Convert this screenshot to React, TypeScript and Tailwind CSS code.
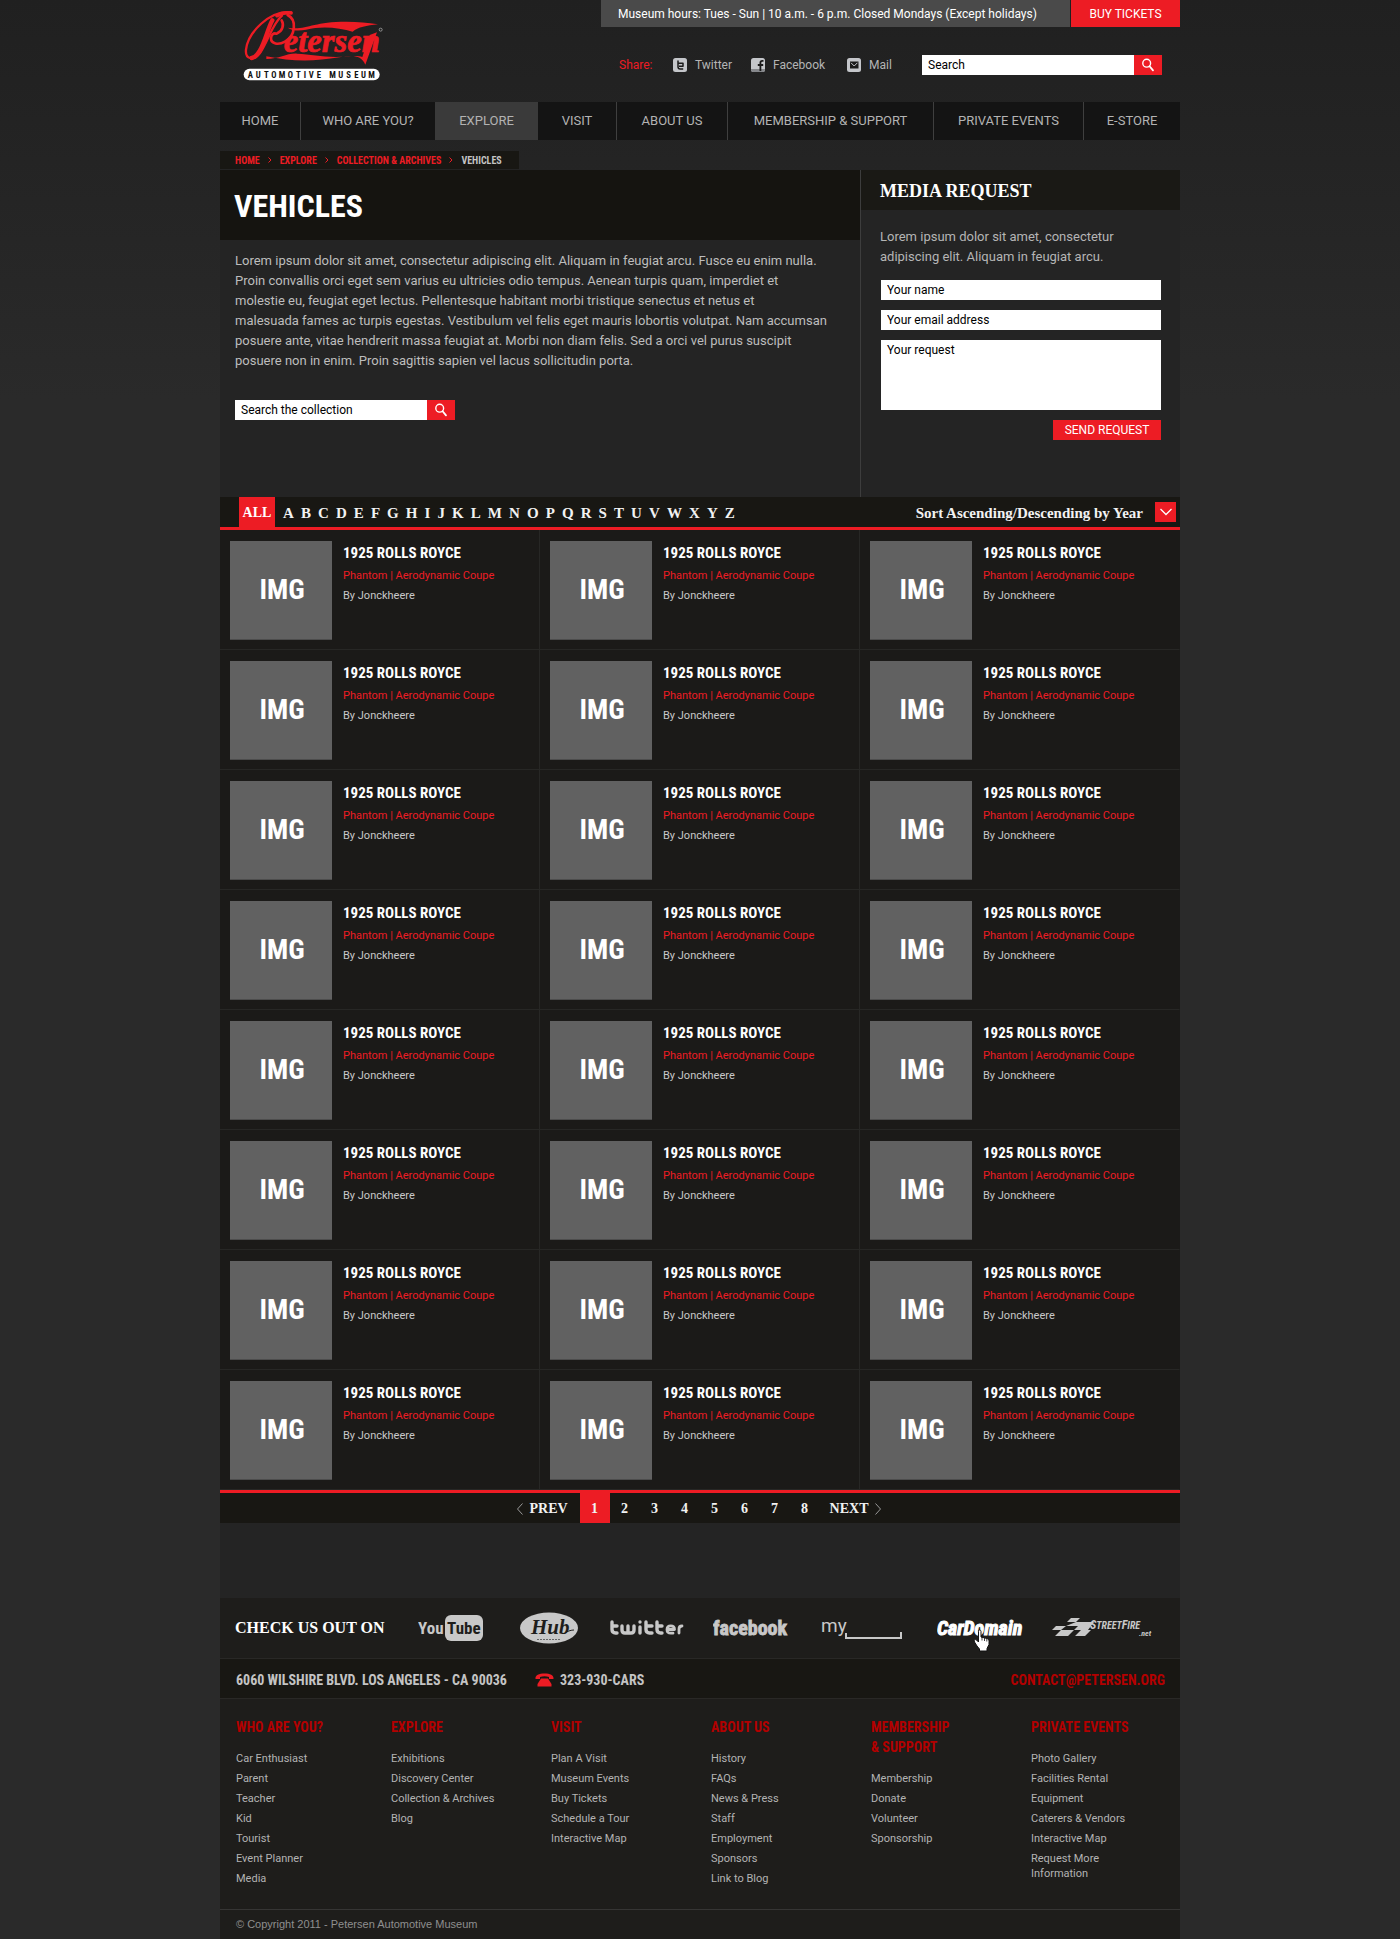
import type { ReactNode } from "react";

const sans = "font-['Roboto',sans-serif]";
const narrow = "font-['Roboto_Condensed','Roboto',sans-serif]";
const slab = "font-['Liberation_Serif',serif]";

function SearchIcon() {
  return (
    <svg viewBox="0 0 14 14" className="h-3.5 w-3.5" fill="none" stroke="#ffffff" aria-hidden="true">
      <circle cx="5.7" cy="5.2" r="3.9" strokeWidth="1.4" />
      <path d="M8.6 8.3 12 12.4" strokeWidth="1.8" strokeLinecap="round" />
    </svg>
  );
}

function Logo() {
  return (
    <svg viewBox="70 25 426 222" className="h-[74px] w-[142px]" role="img" aria-label="Petersen Automotive Museum">
      <g fill="none" stroke="#ed1c24" strokeLinecap="round">
        <path d="M215 38C150 30 84 100 79 150c-3 30 24 34 42 10 22-30 38-90 66-112" strokeWidth="7" />
        <path d="M214 40c-14-2-30 0-42 8" strokeWidth="11" />
        <path d="M158 62c-14 26-22 66-38 92-8 13-16 20-24 21" strokeWidth="13" />
        <path d="M204 46c28 14 24 62-8 80-20 11-42 7-42-10 0-11 8-17 16-14" strokeWidth="8" />
        <path d="M186 62c8 14 2 32-12 38" strokeWidth="8" />
      </g>
      <g fill="#ed1c24" stroke="#ed1c24">
        <path stroke="none" d="M204 84c60 8 70-18 176-18 36 0 64 3 95 8-34 4-60 8-76 22-40-12-92-18-140-6-20 4-40 4-55-6z" />
        <path stroke="none" d="M140 178c40 0 62-18 92-16 48 2 88 14 152 8 20-2 34-2 44 2l22-66 22-8-35 97c-14-30-38-28-78-22-72 12-140 14-219-3z" />
        <text x="192" y="158" strokeWidth="2" className="font-['Liberation_Serif',serif]" fontSize="98" fontStyle="italic" fontWeight="700">etersen</text>
      </g>
      <circle cx="483" cy="90" r="4.5" fill="none" stroke="#bbb" strokeWidth="2" />
      <rect x="72" y="207" width="408" height="35" rx="17.5" fill="#fff" />
      <g className={narrow} fill="#111" fontSize="26" fontWeight="700">
        <text y="234" x="84 108 133 155 177 204 229 252 267 291">AUTOMOTIVE</text>
        <text y="234" x="329 356 380 404 424 446">MUSEUM</text>
      </g>
    </svg>
  );
}

function TwitterBadge() {
  return (
    <svg viewBox="0 0 14 14" className="h-3.5 w-3.5" aria-hidden="true">
      <rect width="14" height="14" rx="2.5" fill="#c4c6ca" />
      <path d="M5 2.500v6.200c0 1.600.9 2.300 2.300 2.300h2.900M5 5.200h5v3H6" fill="none" stroke="#1a1a1a" strokeWidth="1.500" strokeLinejoin="round" />
    </svg>
  );
}

function FacebookBadge() {
  return (
    <svg viewBox="0 0 14 14" className="h-3.5 w-3.5" aria-hidden="true">
      <rect width="14" height="14" rx="2.5" fill="#c4c6ca" />
      <path d="M0 11h14v.5A2.500 2.500 0 0 1 11.500 14h-9A2.500 2.500 0 0 1 0 11.500z" fill="#85878b" />
      <path d="M12.500 2.800h-1.200c-1.300 0-1.900.6-1.900 1.900V13M6.800 7h5.400" fill="none" stroke="#1a1a1a" strokeWidth="1.800" />
    </svg>
  );
}

function MailBadge() {
  return (
    <svg viewBox="0 0 14 14" className="h-3.5 w-3.5" aria-hidden="true">
      <rect width="14" height="14" rx="2.5" fill="#c4c6ca" />
      <rect x="3" y="3.500" width="8.500" height="7" fill="#1a1a1a" />
      <path d="M4 4.800 7.200 8l3.200-3.200" fill="none" stroke="#c4c6ca" strokeWidth="1" />
    </svg>
  );
}

const navItems = ["HOME", "WHO ARE YOU?", "EXPLORE", "VISIT", "ABOUT US", "MEMBERSHIP & SUPPORT", "PRIVATE EVENTS", "E-STORE"];

function Header() {
  return (
    <header>
      <div className="flex items-start justify-between">
        <a href="#home" className="mt-2 ml-[23px]">
          <Logo />
        </a>
        <div className="flex w-[579px] flex-col">
          <div className="flex h-[27px] gap-px text-xs text-white">
            <p className="flex flex-1 items-center bg-[#4a4a4a] pl-[17px]">
              Museum hours: Tues - Sun | 10 a.m. - 6 p.m. Closed Mondays (Except holidays)
            </p>
            <a href="#tickets" className="flex w-[109px] items-center justify-center bg-[#ed1c24]">BUY TICKETS</a>
          </div>
          <div className="mt-7 flex items-center pr-[18px] pl-[18px] text-xs text-[#b5b5b5]">
            <span className="w-[54px] text-[#ed1c24]">Share:</span>
            <a href="#twitter" className="flex w-[78px] items-center gap-2"><TwitterBadge />Twitter</a>
            <a href="#facebook" className="flex w-24 items-center gap-2"><FacebookBadge />Facebook</a>
            <a href="#mail" className="flex items-center gap-2"><MailBadge />Mail</a>
            <form className="ml-auto flex h-5 w-60">
              <input aria-label="Search" placeholder="Search" className="min-w-0 flex-1 bg-white px-1.5 text-black placeholder:text-black" />
              <button type="button" aria-label="Search" className="flex w-7 items-center justify-center bg-[#ed1c24]"><SearchIcon /></button>
            </form>
          </div>
        </div>
      </div>
      <nav className="mt-5 grid grid-cols-[81fr_134fr_103fr_79fr_111fr_206fr_150fr_96fr] bg-[#141414] text-[13px] leading-[38px] text-[#b3b3b3]">
        {navItems.map((item, i) => (
          <a
            key={item}
            href={"#" + item}
            className={
              "text-center whitespace-nowrap " +
              (item === "EXPLORE" ? "bg-[#3a3a3a]" : i === 1 || i === 7 ? "" : "border-r border-[#3f3f3f]")
            }
          >
            {item}
          </a>
        ))}
      </nav>
    </header>
  );
}

function Breadcrumb() {
  const links = ["HOME", "EXPLORE", "COLLECTION & ARCHIVES"];
  return (
    <nav aria-label="Breadcrumb" className={"mt-[11px] mb-px flex h-[18px] w-[299px] items-center gap-2 bg-[#181713] pl-[15px] text-[10px] font-bold whitespace-nowrap text-[#ed1c24] " + narrow}>
      {links.map((l) => (
        <span key={l} className="flex items-center gap-2">
          <a href={"#" + l}>{l}</a>
          <svg viewBox="0 0 4 6" className="h-1.5 w-1" fill="none" stroke="#ed1c24" aria-hidden="true"><path d="M.5.5 3 3 .5 5.500" /></svg>
        </span>
      ))}
      <span className="text-[#c4c4c4]">VEHICLES</span>
    </nav>
  );
}

function Intro() {
  return (
    <section className="flex-1 border-r border-[#3d3d3d]">
      <h1 className={"bg-[#151410] pt-0.5 pl-3.5 text-[32px] leading-[68px] font-bold text-white " + narrow}>VEHICLES</h1>
      <p className="pt-[11px] pl-[15px] text-[13px] leading-5 text-[#bdbdbd]">
        Lorem ipsum dolor sit amet, consectetur adipiscing elit. Aliquam in feugiat arcu. Fusce eu enim nulla.<br />
        Proin convallis orci eget sem varius eu ultricies odio tempus. Aenean turpis quam, imperdiet et<br />
        molestie eu, feugiat eget lectus. Pellentesque habitant morbi tristique senectus et netus et<br />
        malesuada fames ac turpis egestas. Vestibulum vel felis eget mauris lobortis volutpat. Nam accumsan<br />
        posuere ante, vitae hendrerit massa feugiat at. Morbi non diam felis. Sed a orci vel purus suscipit<br />
        posuere non in enim. Proin sagittis sapien vel lacus sollicitudin porta.
      </p>
      <form className="mt-[29px] mb-[77px] ml-[15px] flex h-5 w-[220px] text-xs">
        <input aria-label="Search the collection" placeholder="Search the collection" className="min-w-0 flex-1 bg-white px-1.5 text-black placeholder:text-black" />
        <button type="button" aria-label="Search the collection" className="flex w-7 items-center justify-center bg-[#ed1c24]"><SearchIcon /></button>
      </form>
    </section>
  );
}

function MediaRequest() {
  const field = "w-full bg-white px-1.5 text-black placeholder:text-black";
  return (
    <section className="w-[319px]">
      <h2 className={"bg-[#1a1915] pt-0.5 pl-[19px] text-lg leading-[38px] font-bold text-white " + slab}>MEDIA REQUEST</h2>
      <p className="pt-[17px] pl-[19px] text-[13px] leading-5 text-[#b5b5b5]">
        Lorem ipsum dolor sit amet, consectetur<br />adipiscing elit. Aliquam in feugiat arcu.
      </p>
      <form className="mt-[13px] mr-[19px] ml-5 flex flex-col items-end gap-2.5 text-xs">
        <input aria-label="Your name" placeholder="Your name" className={"h-5 " + field} />
        <input aria-label="Your email address" placeholder="Your email address" className={"h-5 " + field} />
        <textarea aria-label="Your request" placeholder="Your request" className={"block h-[70px] resize-none pt-0.5 " + field} />
        <button type="button" className="h-5 w-[108px] bg-[#ed1c24] text-white">SEND REQUEST</button>
      </form>
    </section>
  );
}

function FilterBar() {
  return (
    <div className={"flex h-[33px] items-stretch border-b-3 border-[#ed1c24] bg-[#181713] pl-[19px] text-[15px] font-bold text-[#f2f2f2] " + slab}>
      <a href="#all" className="flex w-9 items-center justify-center bg-[#ed1c24] pt-0.5 text-sm text-white">ALL</a>
      <div className="ml-2 flex w-[452px] items-center justify-between pt-0.5">
        {"ABCDEFGHIJKLMNOPQRSTUVWXYZ".split("").map((c) => (
          <a key={c} href={"#" + c}>{c}</a>
        ))}
      </div>
      <button type="button" className="mr-1 ml-auto flex items-center gap-3">
        <span className="pt-0.5">Sort Ascending/Descending by Year</span>
        <span className="flex h-5 w-[21px] items-center justify-center bg-[#ed1c24]">
          <svg viewBox="0 0 12 8" className="h-2 w-3" fill="none" stroke="#fff" strokeWidth="1.300" aria-hidden="true"><path d="M.5 1 6 6.500 11.500 1" /></svg>
        </span>
      </button>
    </div>
  );
}

function VehicleCard() {
  return (
    <article className="flex h-[120px] gap-[11px] border-r border-b border-[#272725] pt-[11px] pl-2.5 nth-[3n]:border-r-[#1b1a18]">
      <div className={"flex h-[99px] w-[102px] items-center justify-center border-b border-[#4c4c4c] bg-[#616161] pl-0.5 text-[28px] font-bold text-white " + narrow}>IMG</div>
      <div className="pt-0.5 text-[11px] leading-5">
        <h3 className={"mb-[3px] text-[15px] leading-5 font-bold text-white " + narrow}>1925 ROLLS ROYCE</h3>
        <a href="#vehicle" className="block text-[#ed1c24]">Phantom | Aerodynamic Coupe</a>
        <p className="text-[#c8c8c8]">By Jonckheere</p>
      </div>
    </article>
  );
}

function Pager() {
  return (
    <nav aria-label="Pages" className={"flex h-[33px] items-stretch justify-center border-t-3 border-[#ed1c24] bg-[#181713] pr-0.5 text-sm font-bold text-[#f2f2f2] " + slab}>
      <a href="#prev" className="flex items-center gap-1.5 pt-0.5 pr-3">
        <svg viewBox="0 0 6 12" className="h-3 w-1.5" fill="none" stroke="#999" aria-hidden="true"><path d="M5.500.5.5 6l5 5.500" /></svg>
        PREV
      </a>
      {[1, 2, 3, 4, 5, 6, 7, 8].map((n) => (
        <a key={n} href={"#" + n} className={"flex w-[30px] items-center justify-center pt-0.5 " + (n === 1 ? "bg-[#ed1c24]" : "")}>{n}</a>
      ))}
      <a href="#next" className="flex items-center gap-1.5 pt-0.5 pl-2.5">
        NEXT
        <svg viewBox="0 0 6 12" className="h-3 w-1.5" fill="none" stroke="#999" aria-hidden="true"><path d="M.5.5 5.500 6l-5 5.500" /></svg>
      </a>
    </nav>
  );
}

function SocialLink({ label, className, children }: { label: string; className: string; children: ReactNode }) {
  return <a href={"#" + label} aria-label={label} className={"block shrink-0 " + className}>{children}</a>;
}

function SocialBar() {
  const g = "#c8c8c8";
  return (
    <div className="flex h-[60px] items-center bg-[#1e1d1b] pl-[15px]">
      <h2 className={"w-[183px] shrink-0 text-base font-bold whitespace-nowrap text-white " + slab}>CHECK US OUT ON</h2>
      <SocialLink label="YouTube" className="w-[102px]">
        <svg width="66" height="28" viewBox="0 0 66 28" className={narrow} fontWeight="700">
          <text x="0" y="20" fill={g} fontSize="17">You</text>
          <rect x="27" y="1" width="38" height="26" rx="6" fill={g} />
          <text x="29" y="20" fill="#1e1d1b" fontSize="17">Tube</text>
        </svg>
      </SocialLink>
      <SocialLink label="Hub" className="w-[90px]">
        <svg width="58" height="32" viewBox="0 0 58 32">
          <ellipse cx="29" cy="16" rx="29" ry="15.500" fill={g} />
          <text x="11" y="22" fill="#1e1d1b" fontSize="21" fontStyle="italic" fontWeight="700" className="font-['Liberation_Serif',serif]">Hub</text>
          <path d="M46 20c3-1 5-2 8-2" fill="none" stroke="#1e1d1b" />
          <path d="M17 27.500h24" stroke="#666" strokeDasharray="2 1" />
        </svg>
      </SocialLink>
      <SocialLink label="twitter" className="w-[103px]">
        <svg width="74" height="18" viewBox="0 0 74 18" fill="none" stroke={g} strokeWidth="3.400" strokeLinecap="round" strokeLinejoin="round">
          <path d="M2 3v7.500q0 3.500 3.500 3.500H7M2 7h5M12 7v4q0 3 3 3h6q3 0 3-3V7M18 7v6M30 8v6M30 3v0M36 3v7.500q0 3.500 3.500 3.500H42M36 7h6M47 3v7.500q0 3.500 3.500 3.500H52M47 7h5" />
          <path d="M58 10.500h6.500q0-3.700-3.700-3.700T57 10.500t3.800 3.700H63M69 14v-4q0-3 3-3" strokeWidth="2.800" />
        </svg>
      </SocialLink>
      <SocialLink label="facebook" className="w-[108px]">
        <svg width="80" height="26" viewBox="0 0 80 26">
          <text x="0" y="20" fill={g} stroke={g} strokeWidth=".8" fontSize="20" fontWeight="700" className={narrow}>facebook</text>
        </svg>
      </SocialLink>
      <SocialLink label="Myspace" className="w-[116px]">
        <svg width="82" height="34" viewBox="0 0 82 34" className={sans}>
          <text x="0" y="21" fill={g} fontSize="19">my</text>
          <path d="M25 22v5h55v-6" fill="none" stroke={g} strokeWidth="2" />
        </svg>
      </SocialLink>
      <div className="relative w-[115px] shrink-0">
        <a href="#cardomain" aria-label="CarDomain" className="block">
          <svg width="92" height="26" viewBox="0 0 92 26">
            <text x="0" y="20" fill="#fff" stroke="#fff" strokeWidth="1" fontSize="20" fontStyle="italic" fontWeight="700" className={narrow}>CarDomain</text>
          </svg>
        </a>
        <svg width="17" height="23" viewBox="0 0 17 23" className="absolute top-3.5 left-9" aria-hidden="true">
          <path d="M5.500 1.500c1-1 2.500-.5 2.500 1V8l6 1.500c1.500.5 2 1.500 2 3v3l-2 4V22H6.500v-2L4 17l-2.500-4c-1-2 .5-3 2-2l2 2V2.500z" fill="#fff" stroke="#111" />
          <path d="M9 8v3.500M11.500 9v3M13.800 10v2.500" stroke="#111" strokeWidth=".8" />
        </svg>
      </div>
      <SocialLink label="StreetFire" className="w-[104px]">
        <svg width="104" height="28" viewBox="0 0 104 28" fill={g}>
          <path d="M19 4h9l-4 4h-9zM24 8h18l-6 8H22l4-4H14zM4 12h10l-5 4H0zM9 16h13l-6 6H3zM29 16h10l-6 6H23z" />
          <g fontStyle="italic" fontWeight="700" className={narrow}>
            <text x="38" y="15" fontSize="12">S<tspan fontSize="10">TREET</tspan>F<tspan fontSize="10">IRE</tspan></text>
            <text x="87" y="22" fontSize="8">.net</text>
          </g>
        </svg>
      </SocialLink>
    </div>
  );
}

const footerColumns: { title: string[]; links: string[] }[] = [
  { title: ["WHO ARE YOU?"], links: ["Car Enthusiast", "Parent", "Teacher", "Kid", "Tourist", "Event Planner", "Media"] },
  { title: ["EXPLORE"], links: ["Exhibitions", "Discovery Center", "Collection & Archives", "Blog"] },
  { title: ["VISIT"], links: ["Plan A Visit", "Museum Events", "Buy Tickets", "Schedule a Tour", "Interactive Map"] },
  { title: ["ABOUT US"], links: ["History", "FAQs", "News & Press", "Staff", "Employment", "Sponsors", "Link to Blog"] },
  { title: ["MEMBERSHIP", "& SUPPORT"], links: ["Membership", "Donate", "Volunteer", "Sponsorship"] },
  { title: ["PRIVATE EVENTS"], links: ["Photo Gallery", "Facilities Rental", "Equipment", "Caterers & Vendors", "Interactive Map", "Request More Information"] },
];

function Footer() {
  return (
    <footer className="bg-[#1e1d1b]">
      <SocialBar />
      <div className={"flex h-[41px] items-center border-y border-[#292826] bg-[#181713] pt-0.5 pr-[15px] pl-4 text-sm font-bold text-[#c4c4c4] " + narrow}>
        <address className="w-[299px] whitespace-nowrap not-italic">6060 WILSHIRE BLVD. LOS ANGELES - CA 90036</address>
        <a href="tel:3239302277" className="flex items-center gap-1.5">
          <svg width="19" height="14" viewBox="0 0 19 14" fill="#ed1c24" aria-hidden="true">
            <path d="M.5 6C0 2 4 .5 9.500.5S19 2 18.500 6h-4.500V4q-4.500-1.400-9 0v2zM6 5.500h7l3.500 5.500v2.500h-14V11z" />
          </svg>
          323-930-CARS
        </a>
        <a href="mailto:contact@petersen.org" className="ml-auto text-[#b30000]">CONTACT@PETERSEN.ORG</a>
      </div>
      <div className="grid grid-cols-[155fr_160fr_160fr_160fr_160fr_149fr] pt-[18px] pb-[23px] pl-4">
        {footerColumns.map((col) => (
          <section key={col.title[0]}>
            <h3 className={"mb-3.5 text-sm leading-5 font-bold text-[#b30000] " + narrow}>
              {col.title.map((t) => <span key={t} className="block">{t}</span>)}
            </h3>
            <ul className="flex flex-col gap-[5px] text-[11px] leading-[15px] text-[#b3b3b3]">
              {col.links.map((l) => <li key={l}><a href={"#" + l} className="block max-w-[110px]">{l}</a></li>)}
            </ul>
          </section>
        ))}
      </div>
      <p className="border-t border-[#363534] pl-4 font-['Liberation_Sans',sans-serif] text-[11px] leading-[29px] text-[#8f8f8f]">© Copyright 2011 - Petersen Automotive Museum</p>
    </footer>
  );
}

export default function App() {
  return (
    <div className={"min-h-screen bg-[#2a2a2a] bg-linear-to-b from-[#202020] to-[#2a2a2a] to-[400px] " + sans}>
      <div className="mx-auto w-full max-w-[960px]">
        <Header />
        <Breadcrumb />
        <main className="bg-[#242424] pb-[75px]">
          <div className="flex">
            <Intro />
            <MediaRequest />
          </div>
          <FilterBar />
          <div className="grid grid-cols-3 bg-[#1b1a18]">
            {Array.from({ length: 24 }, (_, i) => <VehicleCard key={i} />)}
          </div>
          <Pager />
        </main>
        <Footer />
      </div>
    </div>
  );
}
